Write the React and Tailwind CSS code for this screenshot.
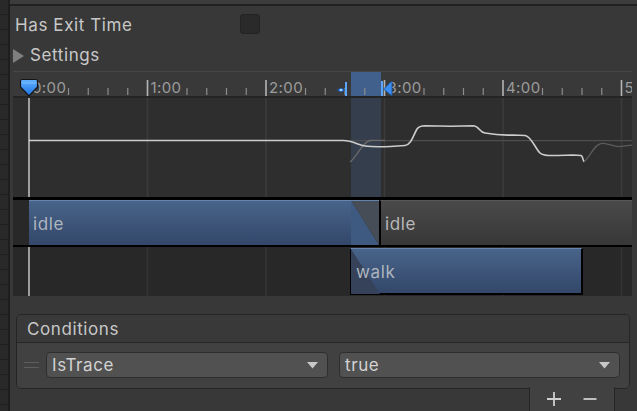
import React from "react";

const PX = 118.5; // pixels per second on the timeline
const X0 = 16; // 0:00 inside the timeline box
const W = 619;
const majors = [0, 1, 2, 3, 4, 5];

function Ruler() {
  const minors = [];
  majors.forEach((s) => {
    for (let k = 2; k < 6; k++) minors.push(X0 + PX * (s + k / 6));
  });
  return (
    <svg width={W} height={25} className="block">
      <rect x="0" y="0" width={W} height="25" fill="#393939" />
      <rect x="0" y="0" width={W} height="1" fill="#474747" />
      <rect x="338" y="1" width="30" height="24" fill="#41608b" />
      {minors.map((x, i) => (
        <line key={i} x1={x} y1="17" x2={x} y2="24" stroke="#8c8c8c" strokeWidth="1.2" />
      ))}
      {majors.map((s) => {
        const x = X0 + PX * s;
        return (
          <g key={s}>
            <line x1={x} y1="9" x2={x} y2="25" stroke="#b4b4b4" strokeWidth="1.6" />
            <text x={x + 3} y="22" fill="#9c9c9c" fontSize="15" letterSpacing="0.4" fontFamily="Inter, sans-serif">
              {s === 5 ? "5" : s + ":00"}
            </text>
          </g>
        );
      })}
      {/* transition markers */}
      <path d="M324.5,19 Q328,15.5 331.5,19 Q328,22.5 324.5,19Z" fill="#3b8df2" stroke="#1d4f94" strokeWidth="1" />
      <circle cx="328" cy="19" r="1.2" fill="#a8d0ff" />
      <rect x="332" y="11" width="2" height="14" fill="#5aa6ff" />
      <rect x="368" y="10" width="2" height="15" fill="#5aa6ff" />
      <path d="M379,10 L370.5,18 L379,25Z" fill="#3b8df2" stroke="#1d4f94" strokeWidth="0.8" />
      {/* playhead */}
      <defs>
        <linearGradient id="ph" x1="0" y1="0" x2="0" y2="1">
          <stop offset="0" stopColor="#63b3ff" />
          <stop offset="1" stopColor="#1b6fe0" />
        </linearGradient>
      </defs>
      <path
        d="M9,8.5 H23 Q24.5,8.5 24.5,10 V16 L16,25 L7.5,16 V10 Q7.5,8.5 9,8.5Z"
        fill="url(#ph)"
        stroke="#161616"
        strokeWidth="1.2"
      />
      <line x1="8.5" y1="12" x2="23.5" y2="12" stroke="#8cc6ff" strokeWidth="0.8" />
    </svg>
  );
}

function Curve() {
  return (
    <svg width={W} height={99} className="block">
      <rect x="0" y="0" width={W} height="99" fill="#2e2e2e" />
      {majors.map((s) => {
        const x = X0 + PX * s;
        return <line key={s} x1={x} y1="0" x2={x} y2="99" stroke="#3b3b3b" strokeWidth="1.6" />;
      })}
      <rect x="338" y="0" width="30" height="99" fill="#47689a" fillOpacity="0.28" />
      <line x1="337" y1="42.7" x2={W} y2="42.7" stroke="#4e4e4e" strokeWidth="1.2" />
      <path d="M337,64 C345,58 349,44 357,42.5 C362,42 366,42.5 372,42.5" fill="none" stroke="#6a6a6a" strokeWidth="1.3" />
      <path
        d="M571,63.7 C578,58 581,46 589,45.3 C596,45 599,48.7 606,48.7 L619,47.2"
        fill="none"
        stroke="#5c5c5c"
        strokeWidth="1.3"
      />
      <path
        d="M16,42.5 L330,42.5 C340,42.5 345,47 352,48 C362,49.5 380,48.5 392,47.5 C398,47 400,38 404,31 C406,28 408,27.7 412,27.7 L438,28.3 L460,27.7 C466,27.7 466,34 472,35 C480,36.5 490,37.5 500,37 L512,37.5 C518,38 522,50 527,55 C530,58 535,57.5 545,57.5 L560,57 L568,57.5 C570,58 570,63 571,63.7"
        fill="none"
        stroke="#cdcdcd"
        strokeWidth="1.6"
      />
      <line x1="16" y1="0" x2="16" y2="99" stroke="#e6e6e6" strokeWidth="1.2" />
    </svg>
  );
}

function Grid() {
  return (
    <svg width={W} height={49} className="absolute inset-0">
      {majors.map((s) => {
        const x = X0 + PX * s;
        return <line key={s} x1={x} y1="0" x2={x} y2="49" stroke="#343434" strokeWidth="1.6" />;
      })}
      <line x1="16" y1="0" x2="16" y2="49" stroke="#e6e6e6" strokeWidth="1.2" />
    </svg>
  );
}

function Dropdown({ label, width }) {
  return (
    <div
      className="h-[26px] flex items-center justify-between pl-[5px] pr-[9px] pt-[2px] bg-[#515151] border border-[#2e2e2e] rounded-[4px] text-[17px] tracking-[0.6px] text-[#d2d2d2]"
      style={{ width }}
    >
      <span>{label}</span>
      <svg width="11" height="7" viewBox="0 0 11 7" className="-mt-[2px]">
        <path d="M0,0 H11 L5.5,6.5Z" fill="#c8c8c8" />
      </svg>
    </div>
  );
}

export default function App() {
  return (
    <div
      className="w-[637px] h-[411px] flex overflow-hidden bg-[#383838] text-[#c8c8c8]"
      style={{ fontFamily: "Inter, 'Noto Sans', sans-serif" }}
    >
      <div className="w-[10px] shrink-0 border-r-2 border-[#1e1e1e] bg-[repeating-linear-gradient(to_bottom,#292929_0px,#292929_14px,#1f1f1f_14px,#1f1f1f_15px)]" />

      <div className="flex-1 flex flex-col min-w-0">
        <div className="h-[6px] bg-[#3c3c3c] border-b-2 border-[#222222]" />

        <div className="h-[36px] flex items-center pl-[5px]">
          <span className="w-[225px] pt-[4px] text-[17px] tracking-[0.6px]">Has Exit Time</span>
          <div className="w-[20px] h-[20px] bg-[#2a2a2a] border border-[#232323] rounded-[3px]" />
        </div>

        <div className="h-[24px] flex items-center pl-[3px] pt-[3px] gap-[6px]">
          <svg width="11" height="14" viewBox="0 0 11 14">
            <path d="M0,0 L11,7 L0,14Z" fill="#7f7f7f" />
          </svg>
          <span className="text-[17px] tracking-[0.6px]">Settings</span>
        </div>

        {/* timeline */}
        <div className="mt-[5px] ml-[3px] w-[619px] h-[225px] flex flex-col bg-[#282828]">
          <Ruler />
          <div className="h-[2px] bg-[#242424]" />
          <Curve />

          <div className="h-[50px] flex border-t-[3px] border-b-2 border-black">
            <div className="w-[16px] shrink-0 bg-[#282828]" />
            <div className="w-[322px] shrink-0 flex items-center pl-[4px] pt-[4px] border-t border-[#6684ad] bg-gradient-to-b from-[#486489] to-[#33476a] text-[17px] tracking-[0.6px] text-[#aeb5bf]">
              idle
            </div>
            <svg width="28" height="45" className="block shrink-0">
              <path d="M0,0 L28,45 L0,45Z" fill="#3e5a80" />
              <path d="M0,0 L28,0 L28,45Z" fill="#474d57" />
              <rect x="0" y="0" width="28" height="1" fill="#6684ad" />
            </svg>
            <div className="flex-1 flex items-center pl-[4px] pt-[4px] border-l-2 border-black bg-gradient-to-b from-[#4a4a4a] to-[#373737] border-t border-t-[#575757] text-[17px] tracking-[0.6px] text-[#b8b8b8]">
              idle
            </div>
          </div>

          <div className="h-[49px] flex relative">
            <Grid />
            <div className="w-[337px] shrink-0" />
            <div className="relative mt-[1px] h-[47px] w-[233px] shrink-0 flex items-center pl-[5px] pt-[3px] border-l border-r-2 border-b-2 border-black border-t border-t-[#6684ad] bg-gradient-to-b from-[#486489] to-[#33476a] text-[17px] tracking-[0.6px] text-[#aeb5bf]">
              <svg width="29" height="45" className="absolute left-0 top-0">
                <path d="M0,0 L29,45 L0,45Z" fill="#36425a" />
              </svg>
              <span className="relative">walk</span>
            </div>
          </div>
        </div>

        {/* conditions */}
        <div className="mt-[18px] ml-[6px] w-[614px] flex flex-col border border-[#252525] rounded-[5px] overflow-hidden">
          <div className="h-[28px] flex items-center pl-[10px] pt-[3px] bg-[#393939] border-b border-[#262626] text-[17px] tracking-[0.6px]">
            Conditions
          </div>
          <div className="flex items-center pt-[9px] pb-[10px] pl-[7px] bg-[#414141]">
            <div className="w-[15px] flex flex-col gap-[4px] mr-[7px]">
              <div className="h-px bg-[#5e5e5e]" />
              <div className="h-px bg-[#5e5e5e]" />
            </div>
            <Dropdown label="IsTrace" width={282} />
            <div className="w-[11px]" />
            <Dropdown label="true" width={281} />
          </div>
        </div>
        <div className="flex justify-end pr-[22px] -mt-[2px]">
          <div className="w-[86px] h-[24px] flex items-start justify-center gap-[20px] pt-[4px] bg-[#414141] border-x border-[#262626] text-[#cfcfcf]">
            <svg width="16" height="16" viewBox="0 0 16 16">
              <path d="M8,1 V15 M1,8 H15" stroke="#cfcfcf" strokeWidth="1.8" />
            </svg>
            <svg width="16" height="16" viewBox="0 0 16 16">
              <path d="M1.5,8 H14.5" stroke="#cfcfcf" strokeWidth="1.8" />
            </svg>
          </div>
        </div>
      </div>
    </div>
  );
}
